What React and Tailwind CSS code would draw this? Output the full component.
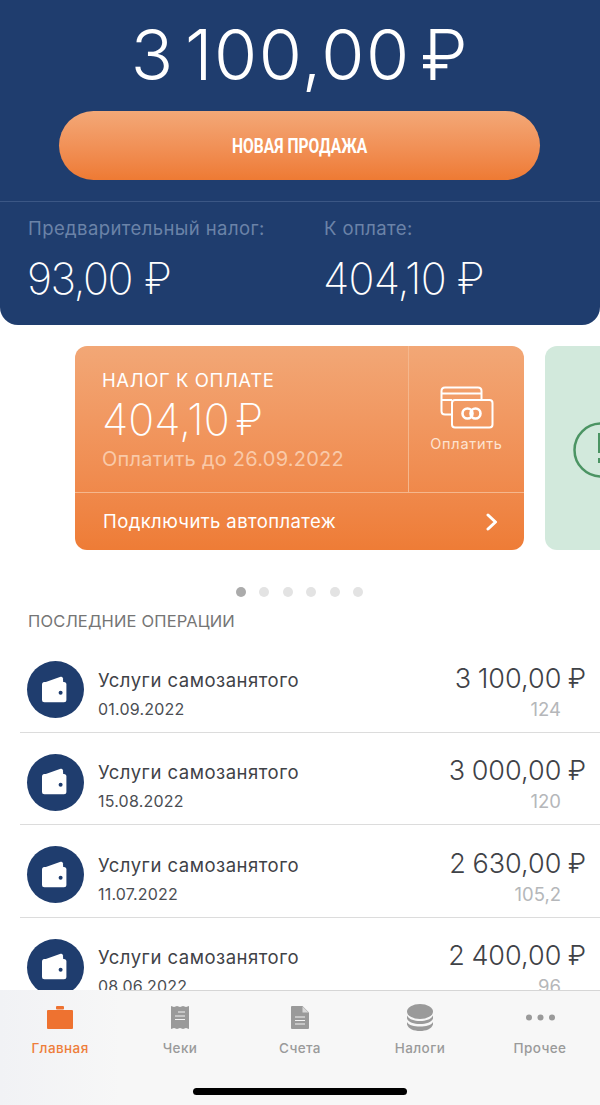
import React from 'react';

const operations = [
  { amount: '3 100,00 ₽', date: '01.09.2022', tax: '124' },
  { amount: '3 000,00 ₽', date: '15.08.2022', tax: '120' },
  { amount: '2 630,00 ₽', date: '11.07.2022', tax: '105,2' },
  { amount: '2 400,00 ₽', date: '08.06.2022', tax: '96' },
];

function WalletIcon() {
  return (
    <svg width="28" height="28" viewBox="0 0 28 28" fill="none">
      <path d="M1 7 L18.6 0.8 Q20.6 0.2 20.9 2.2 L21.3 7 Z" fill="#fff" />
      <rect x="0" y="6" width="24.4" height="20.2" rx="2.5" fill="#fff" />
      <circle cx="18.6" cy="16.8" r="2" fill="#1f3d6e" />
    </svg>
  );
}

function CardsIcon() {
  return (
    <svg width="54" height="43" viewBox="0 0 54 43" fill="none" stroke="#fff" strokeWidth="2">
      <path d="M12 28.5 H5 Q1.5 28.5 1.5 25 V5 Q1.5 1.5 5 1.5 H38 Q41.5 1.5 41.5 5 V14" />
      <path d="M1.5 7.5 H41.5 M1.5 14 H12" />
      <rect x="12" y="14" width="40.5" height="27.5" rx="3" />
      <circle cx="27.5" cy="27.5" r="5" strokeWidth="2.6" />
      <circle cx="35.5" cy="27.5" r="5" strokeWidth="2.6" />
    </svg>
  );
}

function OperationRow({ op }) {
  return (
    <div className="flex h-[92.5px] items-center justify-between border-b border-[#dcdcdc] pt-[9px] pr-[14px] pb-[1px] pl-[7px]">
      <div className="flex items-center">
        <div className="flex h-[57px] w-[57px] items-center justify-center rounded-full bg-[#1f3d6e]">
          <WalletIcon />
        </div>
        <div className="ml-[14px] pt-[7px]">
          <div className="text-[18.5px] leading-[24px] tracking-[0.5px] text-[#3f4247]">Услуги самозанятого</div>
          <div className="mt-[7px] text-[16px] leading-[20px] tracking-[0.2px] text-[#4b4e53]">{op.date}</div>
        </div>
      </div>
      <div className="pt-[3px] text-right">
        <div className="text-[27px] leading-[32px] font-[350] text-[#3f4247] [word-spacing:-1px]">{op.amount}</div>
        <div className="mt-[3px] pr-[25px] text-[18.5px] leading-[22px] text-[#b5b7ba]">{op.tax}</div>
      </div>
    </div>
  );
}

function NavItem({ icon, label, active }) {
  return (
    <div className="flex w-[120px] flex-col items-center">
      <div className="flex h-[36px] items-center justify-center">{icon}</div>
      <div className={`mt-[4px] text-[13.5px] leading-[18px] font-medium tracking-[0.4px] ${active ? 'text-[#ee7d3a]' : 'text-[#9a9a9a]'}`}>
        {label}
      </div>
    </div>
  );
}

export default function App() {
  return (
    <div className="relative h-[1105px] w-[600px] overflow-hidden bg-white font-['Inter',sans-serif]">
      {/* Header */}
      <div className="h-[325px] rounded-b-[18px] bg-[#1f3d6e]">
        <div className="pt-[15px] text-center text-[70px] leading-[80px] font-[350] tracking-[1.5px] text-white [word-spacing:-11px]">3 100,00 ₽</div>
        <div className="mt-[16px] mr-[60px] ml-[59px] flex h-[69px] items-center justify-center rounded-full bg-gradient-to-b from-[#f3a877] to-[#ee7a33]">
          <span className="scale-x-[0.78] font-['Roboto',sans-serif] text-[20px] font-bold text-[#fff]">НОВАЯ ПРОДАЖА</span>
        </div>
        <div className="mt-[21px] flex border-t border-[#3b5785] pl-[27px]">
          <div className="w-[296px]">
            <div className="mt-[14px] ml-[1px] text-[18.5px] leading-[24px] tracking-[0.4px] text-[#6b83a8]">Предварительный налог:</div>
            <div className="mt-[12px] text-[43px] leading-[52px] font-[250] tracking-[-1.5px] text-white [word-spacing:2px]">93,00 ₽</div>
          </div>
          <div>
            <div className="mt-[14px] ml-[1px] text-[18.5px] leading-[24px] tracking-[0.4px] text-[#6b83a8]">К оплате:</div>
            <div className="mt-[12px] text-[43px] leading-[52px] font-[250] tracking-[-0.8px] text-white">404,10 ₽</div>
          </div>
        </div>
      </div>

      {/* Carousel */}
      <div className="mt-[21px] flex gap-[21px] overflow-hidden pl-[75px]">
        <div className="h-[204px] w-[449px] shrink-0 rounded-[12px] bg-gradient-to-b from-[#f2a776] to-[#ee7c36]">
          <div className="flex h-[147px] border-b border-[#f5b78d]">
            <div className="w-[334px] border-r border-[#f5b78d] pt-[22px] pl-[27px]">
              <div className="text-[18.5px] leading-[24px] tracking-[0.6px] text-white">НАЛОГ К ОПЛАТЕ</div>
              <div className="mt-[2px] text-[43px] leading-[50px] font-[250] text-white [word-spacing:-6px]">404,10 ₽</div>
              <div className="mt-[2px] text-[20px] leading-[26px] tracking-[0.25px] text-[#f9c9a8]">Оплатить до 26.09.2022</div>
            </div>
            <div className="flex flex-1 flex-col items-center pt-[40px]">
              <CardsIcon />
              <div className="mt-[5px] text-[14.5px] leading-[20px] tracking-[0.7px] text-[#fde3d0]">Оплатить</div>
            </div>
          </div>
          <div className="flex h-[57px] items-center justify-between pr-[25px] pl-[28px]">
            <span className="text-[18.5px] tracking-[0.4px] text-white">Подключить автоплатеж</span>
            <svg width="14" height="18" viewBox="0 0 14 18" fill="none" stroke="#fff" strokeWidth="3" strokeLinecap="round" strokeLinejoin="round">
              <path d="M3 2 L10.5 9 L3 16" />
            </svg>
          </div>
        </div>
        <div className="flex h-[204px] w-[300px] shrink-0 items-center rounded-[12px] bg-[#d2e9dc] pl-[28px]">
          <svg className="mt-[4px]" width="56" height="56" viewBox="0 0 56 56" fill="none" stroke="#4b9463" strokeWidth="2.5">
            <circle cx="28" cy="28" r="26.5" />
            <path d="M28 11 V31 M28 36 V41" strokeWidth="6" />
          </svg>
        </div>
      </div>

      {/* Pager dots */}
      <div className="mt-[37px] flex justify-center gap-[13.5px] pr-[1px]">
        <span className="h-[10px] w-[10px] rounded-full bg-[#ababab]" />
        <span className="h-[10px] w-[10px] rounded-full bg-[#e3e3e3]" />
        <span className="h-[10px] w-[10px] rounded-full bg-[#e3e3e3]" />
        <span className="h-[10px] w-[10px] rounded-full bg-[#e3e3e3]" />
        <span className="h-[10px] w-[10px] rounded-full bg-[#e3e3e3]" />
        <span className="h-[10px] w-[10px] rounded-full bg-[#e3e3e3]" />
      </div>

      {/* Operations */}
      <div className="mt-[12px] pl-[28px] text-[16.5px] leading-[24px] tracking-[0.15px] text-[#757575]">ПОСЛЕДНИЕ ОПЕРАЦИИ</div>
      <div className="mt-[7px] ml-[20px]">
        {operations.map((op) => (
          <OperationRow key={op.date} op={op} />
        ))}
      </div>

      {/* Tab bar */}
      <div className="absolute right-0 bottom-0 left-0 h-[115px] border-t border-[#d6d6d6] bg-[#f7f7f7]">
        <div className="absolute bottom-0 left-0 h-[115px] w-[120px] bg-gradient-to-r from-[#f1f2f5] to-[#f7f7f7]" />
        <div className="relative flex pt-[8px]">
          <NavItem
            active
            label="Главная"
            icon={
              <svg width="26" height="23" viewBox="0 0 26 23" fill="#ee7230">
                <rect x="9" y="0" width="8" height="3.5" rx="1" />
                <rect x="0" y="4" width="26" height="19" rx="1" />
              </svg>
            }
          />
          <NavItem
            label="Чеки"
            icon={
              <svg width="18" height="23" viewBox="0 0 18 23">
                <path d="M0 0 L3 1 L6 0 L9 1 L12 0 L15 1 L18 0 V23 L15 22 L12 23 L9 22 L6 23 L3 22 L0 23 Z" fill="#9a9a9a" />
                <path d="M7 6 H14 M4 10 H14 M4 13.5 H14" stroke="#f2f2f2" strokeWidth="1.2" />
              </svg>
            }
          />
          <NavItem
            label="Счета"
            icon={
              <svg width="18" height="23" viewBox="0 0 18 23">
                <path d="M1 0 H11.5 L18 6.5 V22 Q18 23 17 23 H1 Q0 23 0 22 V1 Q0 0 1 0 Z" fill="#9a9a9a" />
                <path d="M11.5 0.5 V6.5 H17.5" fill="#d8d8d8" />
                <path d="M4 11 H14 M4 14.5 H14 M4 18 H14" stroke="#f2f2f2" strokeWidth="1.2" />
              </svg>
            }
          />
          <NavItem
            label="Налоги"
            icon={
              <svg width="26" height="27" viewBox="0 0 26 27" fill="#9a9a9a">
                <ellipse cx="13" cy="7.5" rx="13" ry="7.5" />
                <path d="M0 11.5 C2 15.5 7 17 13 17 C19 17 24 15.5 26 11.5 V14.5 C24.5 18.5 19 20 13 20 C7 20 1.5 18.5 0 14.5 Z" />
                <path d="M0 18 C2 21.5 7 22.6 13 22.6 C19 22.6 24 21.5 26 18 V20.5 C24.5 25 19 27 13 27 C7 27 1.5 25 0 20.5 Z" />
              </svg>
            }
          />
          <NavItem
            label="Прочее"
            icon={
              <svg width="29" height="7" viewBox="0 0 29 7" fill="#9a9a9a">
                <circle cx="3" cy="3.5" r="3" />
                <circle cx="14.5" cy="3.5" r="3" />
                <circle cx="26" cy="3.5" r="3" />
              </svg>
            }
          />
        </div>
        <div className="absolute bottom-[10px] left-[193px] h-[7px] w-[214px] rounded-full bg-black" />
      </div>
    </div>
  );
}
